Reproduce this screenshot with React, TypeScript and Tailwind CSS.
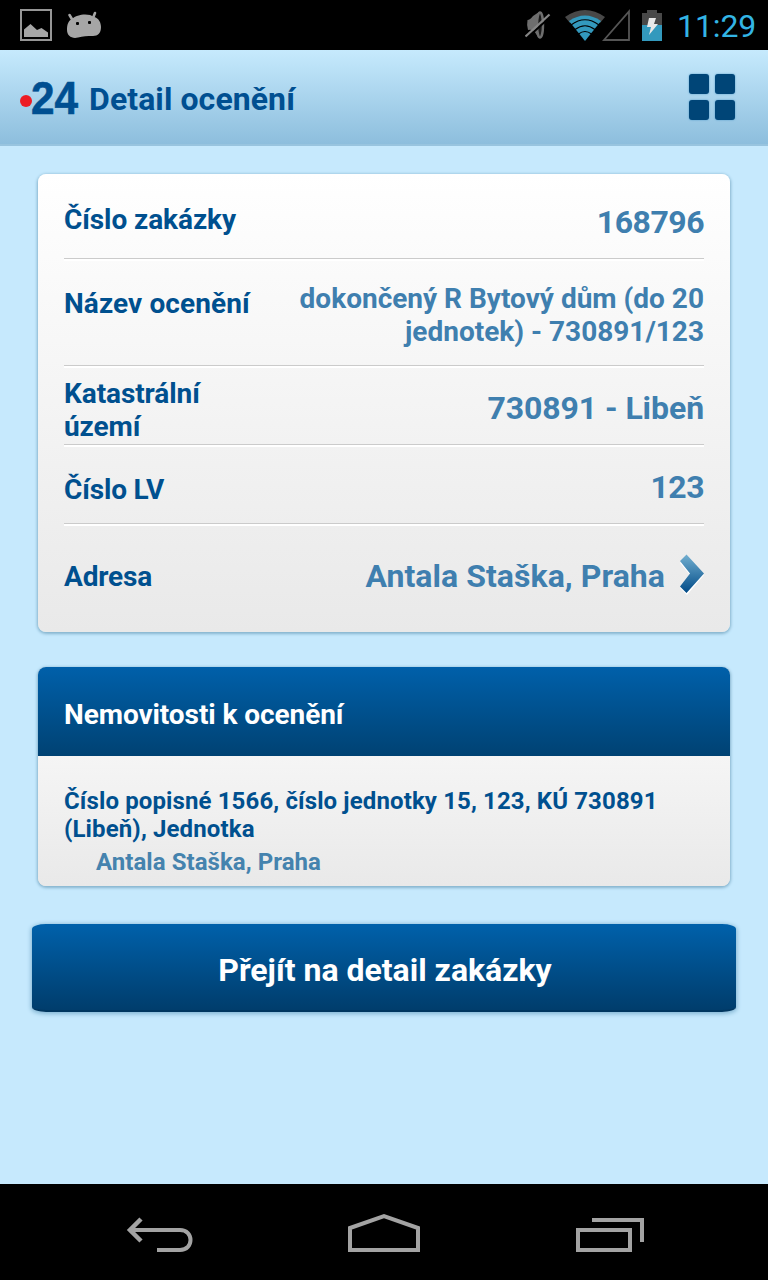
import React from 'react';
import clsx from 'clsx';

interface Detail {
    label: string;
    value: string;
    rowClass: string;
    labelClass: string;
    valueClass: string;
    hasArrow?: boolean;
}

const details: Detail[] = [
    { label: 'Číslo zakázky', value: '168796', rowClass: 'h-[84px]', labelClass: 'mt-[29px] tracking-[-0.08px]', valueClass: 'mt-[29px] text-[32px] leading-[38px] tracking-[-0.5px]' },
    { label: 'Název ocenění', value: 'dokončený R Bytový dům (do 20 jednotek) - 730891/123', rowClass: 'h-[104px]', labelClass: 'mt-[26px] tracking-[0.1px]', valueClass: 'mt-[21px] w-[416px] text-[28px] leading-[33px]' },
    { label: 'Katastrální území', value: '730891 - Libeň', rowClass: 'h-[76px]', labelClass: 'mt-[9px] w-[160px] tracking-[-0.08px]', valueClass: 'mt-[21px] text-[32px] leading-[38px] tracking-[-0.08px]' },
    { label: 'Číslo LV', value: '123', rowClass: 'h-[76px]', labelClass: 'mt-[26px] tracking-[-0.15px]', valueClass: 'mt-[21px] text-[32px] leading-[38px] tracking-[-0.5px]' },
    { label: 'Adresa', value: 'Antala Staška, Praha', rowClass: 'h-[106px]', labelClass: 'mt-[34px] tracking-[-0.15px]', valueClass: 'mt-[31px] text-[32px] leading-[38px] tracking-[0.05px]', hasArrow: true },
];

const StatusBar: React.FC = () => (
    <div className="flex h-[50px] items-center justify-between bg-black pl-5 pr-[13px]">
        <div className="flex items-center">
            <svg width="32" height="32" viewBox="0 0 32 32">
                <rect x="1" y="1" width="30" height="30" fill="none" stroke="#969696" strokeWidth="2" />
                <path d="M4 28V20.5L10.5 15L17 21L21.5 19L28 23.5V28Z" fill="#a6a6a6" />
            </svg>
            <svg className="ml-3.5" width="36" height="30" viewBox="0 0 36 30">
                <path d="M3.5 5L6.5 10M29 3L27 8" stroke="#a6a6a6" strokeWidth="2.6" strokeLinecap="round" />
                <path d="M6 9C11 4 23 3 28 7C33 8 35 13 35 17C35 23 32 26 27 26C21 26 17 26 12 27.5C6 29 1 26 1 20C1 15 2 11 6 9Z" fill="#a6a6a6" />
                <rect x="10" y="12" width="3" height="3" rx="1" fill="#000" />
                <rect x="22" y="11" width="3" height="3" rx="1" fill="#000" />
            </svg>
        </div>
        <div className="flex items-center">
            <svg width="26" height="30" viewBox="0 0 26 30">
                <path d="M2.5 10Q5 10 8 6L14 2V28L9 21Q6 19 3 20Q1.5 15 2.5 10Z" fill="#6e6e6e" />
                <ellipse cx="15" cy="15" rx="3" ry="12.5" fill="#1a1a1a" stroke="#6e6e6e" strokeWidth="2.4" />
                <path d="M1.5 28.5L25.5 6.5" stroke="#000" strokeWidth="2" />
                <path d="M0.5 26.5L24.5 4.5" stroke="#868686" strokeWidth="2.2" />
            </svg>
            <svg className="ml-3.5" width="40" height="32" viewBox="0 0 40 32">
                <path d="M0 8Q20 -6 40 8L35 14Q20 4 5 14Z" fill="#484848" />
                <path d="M4 12Q20 1 36 12L20 32Z" fill="#3399bd" />
                <path d="M6 16Q20 5.5 34 16M10 20.5Q20 13 30 20.5M13.5 25Q20 20 26.5 25" fill="none" stroke="#000" strokeWidth="1.2" />
            </svg>
            <svg className="-ml-2" width="34" height="32" viewBox="0 0 34 32">
                <path d="M7 31L32 2.5V31Z" fill="none" stroke="#555" strokeWidth="1.8" />
            </svg>
            <svg className="ml-[11px]" width="20" height="32" viewBox="0 0 20 32">
                <path d="M0 4H5V1H15V4H20V16H0Z" fill="#484848" />
                <path d="M0 16H20V32H0Z" fill="#3399bd" />
                <path d="M7 9H14L12 15H16L7 26L9 18H5Z" fill="#e8e8e8" />
            </svg>
            <span className="ml-[15px] w-[78px] whitespace-nowrap pt-0.5 text-[32px] leading-[38px] tracking-[-0.1px] text-[#33b5e5]">11:29</span>
        </div>
    </div>
);

const Header: React.FC = () => (
    <header className="flex h-24 items-center justify-between border-b-2 border-[#98c4df] bg-gradient-to-b from-[#c6eafd] to-[#8dbedd] pl-5 pr-[33px]">
        <div className="flex items-center text-[#004f91]">
            <span className="mt-2 size-3 rounded-full bg-[#ed1c24]" />
            <span className="-ml-px mt-px w-[58px] origin-left scale-x-[0.92] font-['Liberation_Sans'] text-[46px] font-bold leading-[50px] [-webkit-text-stroke:0.6px_#004f91]">24</span>
            <h1 className="mt-[3px] whitespace-nowrap text-[32px] font-bold leading-[38px] tracking-[0.08px]">Detail ocenění</h1>
        </div>
        <div className="grid grid-cols-2 gap-1.5">
            {[0, 1, 2, 3].map((tile) => (
                <div key={tile} className="size-5 rounded-[3px] bg-[#004577] shadow-[0_0_2px_#4e9ac9]" />
            ))}
        </div>
    </header>
);

const Arrow: React.FC = () => (
    <svg className="-mr-px ml-3.5 mt-[28px]" width="26" height="42" viewBox="0 0 26 42">
        <defs>
            <linearGradient id="arrow" x1="0" y1="0" x2="0" y2="1">
                <stop offset="0" stopColor="#72afd0" />
                <stop offset="1" stopColor="#004a87" />
            </linearGradient>
        </defs>
        <path d="M1 9L8 2L25 21L8 41L1 34L11 21Z" fill="#fff" />
        <path d="M1 7L7.5 0.5L25 19.5L7.5 39L1 32.5L11 19.5Z" fill="url(#arrow)" />
    </svg>
);

const App: React.FC = () => {
    return (
        <div className="flex h-[1280px] w-[768px] flex-col overflow-hidden bg-[#c6e9fd] font-[Roboto,sans-serif]">
            <StatusBar />
            <Header />

            <main className="flex-1 px-8 pt-7">
                <section className="mx-1.5 h-[458px] rounded-lg bg-gradient-to-b from-white to-[#e9e9e9] px-[26px] shadow-[0_1px_3px_1px_#86b4ce]">
                    {details.map((item, i) => (
                        <React.Fragment key={item.label}>
                            {i > 0 && <div className="h-[3px] border-b-2 border-t border-b-white border-t-[#cbcbcb]" />}
                            <div className={clsx('flex items-start', item.rowClass)}>
                                <div className={clsx('text-[28px] font-bold leading-[33px] text-[#00508f]', item.labelClass)}>{item.label}</div>
                                <div className={clsx('ml-auto text-right font-bold text-[#3f7faf]', item.valueClass)}>{item.value}</div>
                                {item.hasArrow && <Arrow />}
                            </div>
                        </React.Fragment>
                    ))}
                </section>

                <section className="mx-1.5 mt-[35px] h-[219px] overflow-hidden rounded-lg bg-[#e9e9e9] shadow-[0_1px_3px_1px_#86b4ce]">
                    <h2 className="h-[89px] bg-gradient-to-b from-[#0060aa] to-[#004273] px-[26px] pt-[31px] text-[28px] font-bold leading-[33px] tracking-[-0.08px] text-white">
                        Nemovitosti k ocenění
                    </h2>
                    <div className="h-[130px] bg-gradient-to-b from-[#f5f5f5] to-[#e9e9e9] px-[26px] pt-[31px] text-2xl font-bold leading-7">
                        <p className="tracking-[0.12px] text-[#00508f]">Číslo popisné 1566, číslo jednotky 15, 123, KÚ 730891 (Libeň), Jednotka</p>
                        <p className="mt-[5px] pl-8 tracking-[0.05px] text-[#4583ae]">Antala Staška, Praha</p>
                    </div>
                </section>

                <button className="mt-[38px] flex h-[88px] w-full items-start justify-center rounded-[14px/5px] border-b-2 border-[#00365f] bg-gradient-to-b from-[#0061ab] to-[#003d6c] pl-0.5 pt-[27px] text-[32px] font-bold leading-[38px] text-white shadow-[0_1px_4px_1px_#83b5d3]">
                    Přejít na detail zakázky
                </button>
            </main>

            <nav className="flex h-24 items-start bg-black px-[124px] pt-[30px]">
                <svg width="72" height="40" viewBox="0 0 72 40" fill="none" stroke="#a3a3a3" strokeWidth="4">
                    <path d="M17 5L6 16L17 27" strokeWidth="4.5" />
                    <path d="M6 16H56C70 16 70 36 56 36H33" />
                </svg>
                <svg className="ml-[152px]" width="72" height="40" viewBox="0 0 72 40" fill="none" stroke="#a3a3a3" strokeWidth="4">
                    <path d="M2 36V14L36 2.2L70 14V36Z" />
                </svg>
                <svg className="ml-auto" width="68" height="40" viewBox="0 0 68 40" fill="none" stroke="#a3a3a3" strokeWidth="4">
                    <path d="M2 16H54V36H2Z" />
                    <path d="M16 6H66V28" />
                </svg>
            </nav>
        </div>
    );
};

export default App;
